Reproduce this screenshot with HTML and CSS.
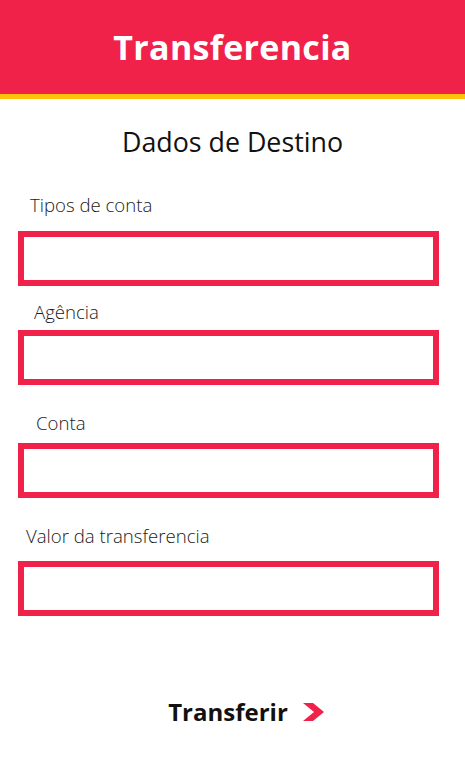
FILE: index.html
```html
<!DOCTYPE html>
<html lang="pt">
<head>
<meta charset="utf-8">
<title>Transferencia</title>
<link rel="stylesheet" href="styles.css">
</head>
<body>
<header class="header">
  <h1 class="header-title">Transferencia</h1>
</header>
<main class="content">
  <h2 class="section-title">Dados de Destino</h2>
  <form class="form">
    <div class="field field-tipo">
      <label class="field-label" for="tipo">Tipos de conta</label>
      <input class="field-input" id="tipo" type="text">
    </div>
    <div class="field field-agencia">
      <label class="field-label" for="agencia">Agência</label>
      <input class="field-input" id="agencia" type="text">
    </div>
    <div class="field field-conta">
      <label class="field-label" for="conta">Conta</label>
      <input class="field-input" id="conta" type="text">
    </div>
    <div class="field field-valor">
      <label class="field-label" for="valor">Valor da transferencia</label>
      <input class="field-input" id="valor" type="text">
    </div>
    <div class="actions">
      <button class="submit" type="button">
        <span class="submit-text">Transferir</span>
        <svg class="submit-icon" width="22" height="18" viewBox="0 0 22 18" aria-hidden="true">
          <polygon points="0,0 10,0 21,9 10,18 0,18 11,9" fill="#F0224A"/>
        </svg>
      </button>
    </div>
  </form>
</main>
</body>
</html>
```

FILE: styles.css
```css
* { box-sizing: border-box; }

body {
  margin: 0;
  background: #ffffff;
  font-family: "Open Sans", "Liberation Sans", sans-serif;
  color: #111111;
}

.header {
  height: 99px;
  background: #F0224A;
  border-bottom: 5px solid #FFC107;
  display: flex;
  align-items: center;
  justify-content: center;
}

.header-title {
  margin: 0;
  font-size: 34px;
  font-weight: 700;
  color: #ffffff;
  line-height: normal;
  letter-spacing: 0.3px;
}

.content {
  display: flex;
  flex-direction: column;
}

.section-title {
  margin: 25px 0 0;
  text-align: center;
  font-size: 26.8px;
  line-height: 36px;
  font-weight: 400;
  color: #111111;
}

.form {
  display: flex;
  flex-direction: column;
}

.field {
  display: flex;
  flex-direction: column;
}

.field-label {
  font-size: 18.6px;
  line-height: 24px;
  font-weight: 300;
  color: #1a1a1a;
}

.field-input {
  margin: 0 26px 0 18px;
  height: 55px;
  border: 6px solid #F0224A;
  background: #ffffff;
  outline: none;
  font: inherit;
}

.field-tipo { margin-top: 33px; }
.field-tipo .field-label { padding-left: 30px; margin-bottom: 14px; }

.field-agencia { margin-top: 14px; }
.field-agencia .field-label { padding-left: 34px; margin-bottom: 6px; }

.field-conta { margin-top: 26px; }
.field-conta .field-label { padding-left: 36px; margin-bottom: 8px; }

.field-valor { margin-top: 26px; }
.field-valor .field-label { padding-left: 26px; margin-bottom: 13px; }

.actions {
  margin-top: 81px;
  display: flex;
  justify-content: center;
  padding-left: 28px;
}

.submit {
  display: flex;
  align-items: center;
  gap: 15px;
  border: 0;
  background: none;
  padding: 0;
  cursor: pointer;
  font-family: inherit;
}

.submit-text {
  font-size: 24px;
  line-height: 30px;
  font-weight: 700;
  color: #111111;
}

.submit-icon { display: block; }
```
